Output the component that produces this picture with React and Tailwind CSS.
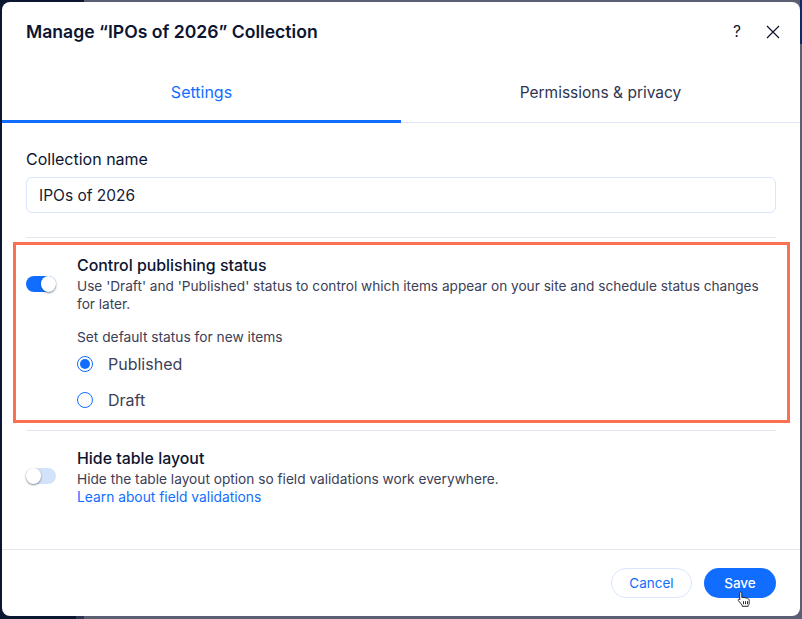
import React from "react";

function Toggle({ on }) {
  return (
    <div className={`relative h-4 w-[30px] shrink-0 rounded-full ${on ? "bg-[#116dff]" : "bg-[#d3e2fb]"}`}>
      <div
        className={`absolute top-0 h-4 w-[15px] rounded-full bg-white shadow-[0_1px_2px_rgba(22,45,61,0.55)] ${on ? "right-0" : "left-0"}`}
      />
    </div>
  );
}

function Radio({ checked, label }) {
  return (
    <div className="flex h-[36px] items-center gap-[15px]">
      <div className="flex h-4 w-4 items-center justify-center rounded-full border border-[#116dff] bg-white">
        {checked && <div className="h-[10px] w-[10px] rounded-full bg-[#116dff]" />}
      </div>
      <span className="text-[16px] leading-6 text-[#3b4057]">{label}</span>
    </div>
  );
}

export default function App() {
  return (
    <div
      className="relative h-[619px] w-[802px] overflow-hidden bg-[#5a6072] pt-[2px] pl-[2px]"
      style={{ fontFamily: "Inter, 'Liberation Sans', sans-serif" }}
    >
      <div className="absolute top-0 bottom-0 left-0 w-[84px] bg-[#0b1730]" />
      <div className="absolute bottom-0 left-[76px] h-[3px] w-2 bg-[#2c3650]" />
      <div className="absolute top-0 right-0 h-[44px] w-[2px] bg-[#0f2a6b]" />
      <div className="relative flex h-[614px] w-[798px] flex-col rounded-[8px] bg-white text-[#162d3d]">
        <header className="flex h-[60px] items-center justify-between pr-[18px] pl-6">
          <h1 className="text-[17.6px] leading-6 font-semibold text-[#0c1530]">Manage “IPOs of 2026” Collection</h1>
          <div className="flex items-center gap-[23px] text-[#0c1530]">
            <span className="text-[15.5px] leading-5">?</span>
            <svg width="18" height="18" viewBox="0 0 18 18" fill="none" stroke="currentColor" strokeWidth="1.2">
              <path d="M3 3l12 12M15 3L3 15" />
            </svg>
          </div>
        </header>
        <nav className="flex h-[61px] border-b border-[#dfe5f5]">
          <div className="-mb-px flex w-[399px] items-center justify-center border-b-[3px] border-[#116dff] pt-[1px] text-[16px] text-[#116dff]">
            Settings
          </div>
          <div className="flex flex-1 items-center justify-center pt-[1px] text-[15.5px] text-[#2f3550]">
            Permissions &amp; privacy
          </div>
        </nav>
        <div className="flex flex-1 flex-col px-6">
          <label className="mt-[26px] block text-[16px] leading-5 text-[#0c1530]">Collection name</label>
          <div className="mt-[8px] flex h-[36px] items-center rounded-[6px] border border-[#d9e6fb] px-3 pt-[1px] text-[15.5px] text-[#162038]">
            IPOs of 2026
          </div>
          <div className="mt-6 h-px bg-[#e3e6ec]" />
          <section className="-mr-[14px] -ml-[13px] mt-[4px] flex h-[181px] gap-[21px] border-[3px] border-[#fa7051] pl-[10px]">
            <div className="pt-[31px]"><Toggle on /></div>
            <div className="min-w-0 flex-1 pt-[10px]">
              <h2 className="text-[15.9px] leading-[22px] font-medium text-[#0c1530]">Control publishing status</h2>
              <p className="w-[690px] text-[13.65px] leading-[18px] text-[#3b4057]">
                Use 'Draft' and 'Published' status to control which items appear on your site and schedule status changes for later.
              </p>
              <p className="mt-[15px] text-[13.75px] leading-[18px] text-[#3b4057]">Set default status for new items</p>
              <Radio checked label="Published" />
              <Radio label="Draft" />
            </div>
          </section>
          <div className="mt-[7px] h-px bg-[#e3e6ec]" />
          <div className="mt-[17px] flex gap-[21px]">
            <div className="pt-[20px]"><Toggle /></div>
            <div>
              <h2 className="text-[15.9px] leading-[22px] font-medium text-[#0c1530]">Hide table layout</h2>
              <p className="text-[13.7px] leading-[18px] text-[#3b4057]">Hide the table layout option so field validations work everywhere.</p>
              <a className="block text-[13.8px] leading-[18px] text-[#116dff]">Learn about field validations</a>
            </div>
          </div>
        </div>
        <footer className="flex h-[67px] items-center justify-end gap-3 border-t border-[#e3e6ec] px-6">
          <button className="h-[30px] w-[81px] rounded-full border border-[#d9e6fb] bg-white text-[13.5px] text-[#116dff]">Cancel</button>
          <div className="relative">
            <button className="h-[30px] w-[72px] rounded-full bg-[#116dff] text-[13.5px] font-medium text-white">Save</button>
            <svg className="absolute top-[23px] left-[33px]" width="15" height="17" viewBox="0 0 15 20" preserveAspectRatio="none">
              <path
                d="M3.5 1.2c.8 0 1.3.6 1.3 1.3v5.2l1-.2 1.2.2 1.1.2 1.2.3 1.2.4c1 .4 1.7 1.2 1.7 2.3v3.6c0 1-.5 1.8-1 2.5V18H5.2v-1.3L1.6 11.6c-.5-.7-.5-1.5.1-1.9.6-.4 1.3-.2 1 .6V2.5c0-.7 0-1.3.8-1.3z"
                fill="#fff"
                stroke="#1c1c1c"
                strokeWidth="1"
              />
              <path d="M6.5 12v3.5M8.5 12v3.5M10.5 12v3.5" stroke="#1c1c1c" strokeWidth="1" />
            </svg>
          </div>
        </footer>
      </div>
    </div>
  );
}
